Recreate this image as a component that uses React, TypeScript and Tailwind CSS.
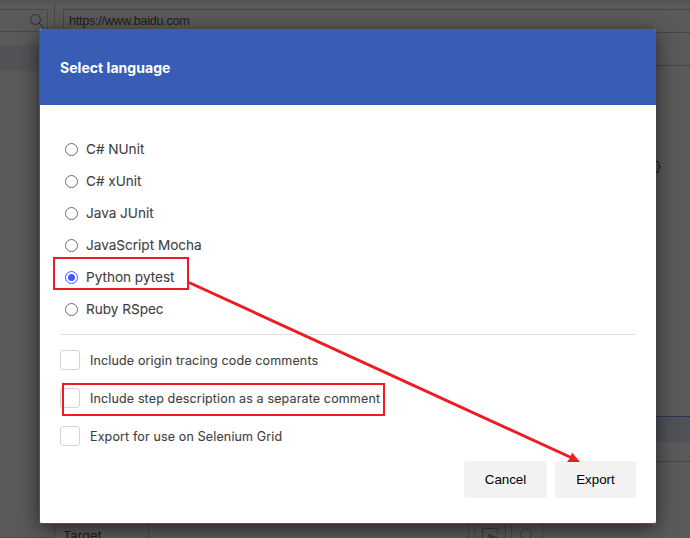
import React from "react";

const languages = ["C# NUnit", "C# xUnit", "Java JUnit", "JavaScript Mocha", "Python pytest", "Ruby RSpec"];
const options = [
  "Include origin tracing code comments",
  "Include step description as a separate comment",
  "Export for use on Selenium Grid",
];

function Radio({ label, checked }: { label: string; checked: boolean }) {
  return (
    <div className="flex h-8 items-center">
      <span
        className={`ml-[5px] flex size-[13px] items-center justify-center rounded-full border ${
          checked ? "border-[#3f5cf5]" : "border-[#6b6b6b]"
        }`}
      >
        {checked && <span className="size-[7px] rounded-full bg-[#3f5cf5]" />}
      </span>
      <span className="ml-2 text-[13.6px] tracking-[-0.02px] whitespace-nowrap [-webkit-text-stroke:0.1px_#3f3f3f]">{label}</span>
    </div>
  );
}

function Option({ label }: { label: string }) {
  return (
    <div className="flex h-[38px] items-center">
      <span className="size-5 rounded-[3px] border border-[#d4d4d4] bg-white" />
      <span className="ml-[10px] pt-[2px] text-[12.5px] tracking-[0.14px] whitespace-nowrap [-webkit-text-stroke:0.1px_#3f3f3f]">
        {label}
      </span>
    </div>
  );
}

function Backdrop() {
  return (
    <div className="flex h-[538px] flex-col bg-[#5a5a5a] text-[#1d1d1d]">
      <div className="h-[3px] shrink-0 border-b border-[#525252] bg-[#555555]" />
      <div className="flex min-h-0 grow">
        <div className="flex w-[55px] shrink-0 flex-col border-r border-[#484848]">
          <div className="mt-1.5 mr-1.5 flex h-[23px] items-center justify-end rounded-r-[2px] border border-l-0 border-[#484848]">
            <svg className="mr-[2px] size-4" viewBox="0 0 16 16" fill="none" stroke="#303030" strokeWidth="1">
              <circle cx="6.5" cy="6.5" r="5" />
              <path d="M10.2 10.2L15 15" />
            </svg>
          </div>
          <div className="mt-[13px] h-[26px] bg-[#515357]" />
          <div className="grow" />
          <div className="h-px bg-[#514b4b]" />
        </div>
        <div className="flex min-w-0 grow flex-col">
          <div className="mt-1.5 ml-2 flex h-6 shrink-0 items-center rounded-l-[2px] border border-r-0 border-[#464646] pl-[5px] font-['Liberation_Sans',sans-serif] text-[12.5px] tracking-[-0.22px]">
            https://www.baidu.com
          </div>
          <div className="h-[33px] shrink-0 border-b border-[#464646]" />
          <div className="flex h-[351px] shrink-0 items-start justify-end border-b border-[#2f3555] pt-[92px] pr-[28px] font-['Liberation_Mono',monospace] text-[12px]">
            {"}"}
          </div>
          <div className="h-[25px] shrink-0 bg-[#505257]" />
          <div className="h-5 shrink-0 border-b border-[#464646]" />
          <div className="flex min-h-0 grow overflow-hidden pt-[54px] font-['Inter',sans-serif] text-[13px] leading-5">
            <div className="w-[94px] shrink-0 border-r border-[#4a4a4a] pt-[10px] pl-2 tracking-[-0.1px]">Target</div>
            <div className="w-80 shrink-0 border-r border-[#484848]" />
            <div className="ml-[5px] flex w-8 shrink-0 justify-center border-x border-[#484848] pt-[12px]">
              <svg className="size-4" viewBox="0 0 16 16" fill="none" stroke="#3c3c3c">
                <path d="M.5 14V.5h15V6" />
                <path d="M6 6l10 4-4 2-2 4z" fill="#3c3c3c" />
              </svg>
            </div>
            <div className="ml-[5px] flex w-8 shrink-0 justify-center border-x border-[#484848] pt-[12px]">
              <svg className="size-4" viewBox="0 0 16 16" fill="none" stroke="#3c3c3c">
                <circle cx="7" cy="6.5" r="5.5" />
                <path d="M11 11l5 5" />
              </svg>
            </div>
          </div>
        </div>
      </div>
    </div>
  );
}

export default function App() {
  return (
    <div className="relative h-[538px] w-[690px] overflow-hidden">
      <Backdrop />
      <div className="absolute top-[29px] left-[39px] flex h-[495px] w-[617px] flex-col rounded-[2px] border-b border-l border-[#3b50a4] bg-white font-['Inter',sans-serif] text-[#3f3f3f] shadow-[0_4px_20px_rgba(0,0,0,0.6)]">
        <div className="flex h-[76px] shrink-0 items-center rounded-t-[2px] border-t border-[#4d55a8] bg-[#385db4] pl-5 text-sm font-bold text-white">
          <span className="tracking-[0.04px]">Select language</span>
        </div>
        <div className="mx-5 mt-7 border-b border-[#dfdfdf] pb-[9px]">
          {languages.map((l) => (
            <Radio key={l} label={l} checked={l === "Python pytest"} />
          ))}
        </div>
        <div className="mx-5 mt-[6px]">
          {options.map((o) => (
            <Option key={o} label={o} />
          ))}
        </div>
        <div className="mt-[6px] mr-5 flex justify-end gap-2 font-['Liberation_Sans',sans-serif] text-[13.33px] text-black">
          <button className="h-[37px] w-[83px] rounded-[3px] bg-[#f2f2f2]">Cancel</button>
          <button className="h-[37px] w-[81px] rounded-[3px] bg-[#f2f2f2]">Export</button>
        </div>
      </div>
      <svg className="absolute inset-0 h-[538px] w-[690px]" viewBox="0 0 690 538" fill="none" stroke="#ed1c24">
        <rect x="54" y="258" width="134" height="31" strokeWidth="2" />
        <rect x="63" y="384" width="321" height="31" strokeWidth="2" />
        <path d="M189 282.5L571 457.5" strokeWidth="3" />
        <path d="M580 462L572 452.5L570.5 457.5L567 462Z" fill="#ed1c24" stroke="none" />
      </svg>
    </div>
  );
}
